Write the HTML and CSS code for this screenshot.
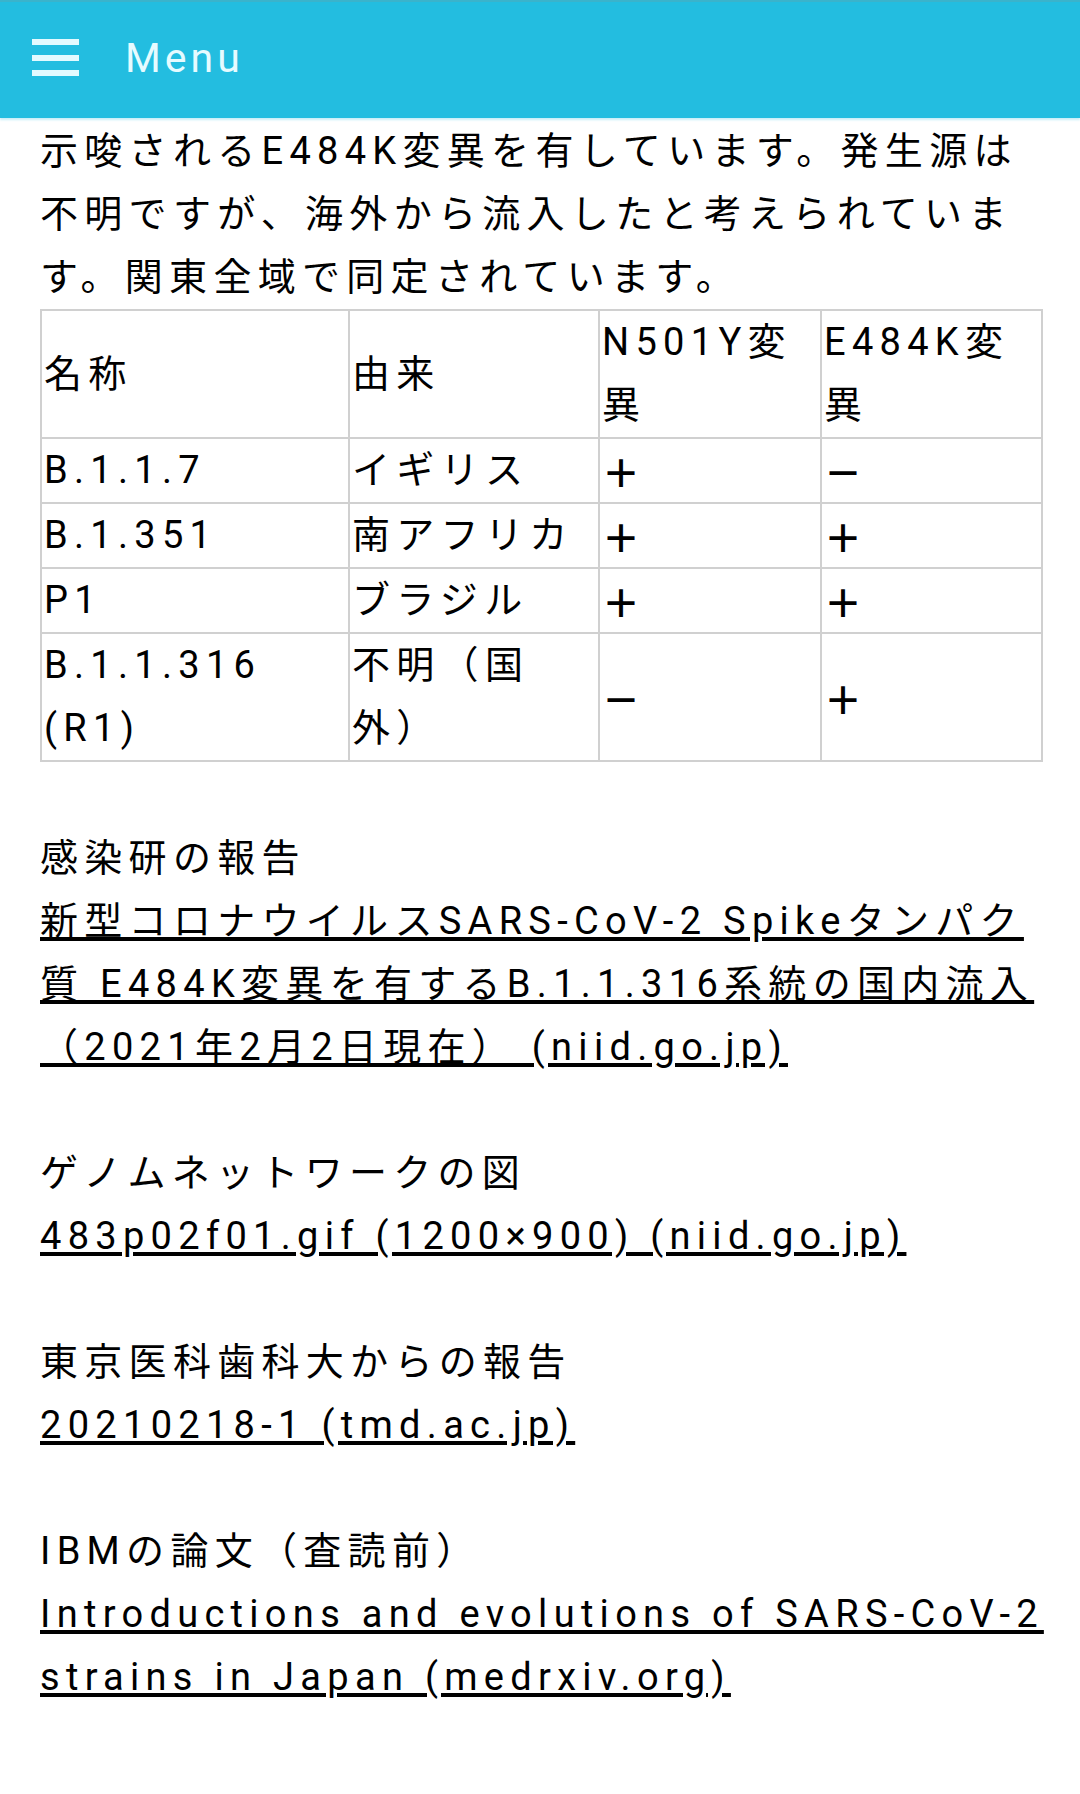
FILE: index.html
```html
<!DOCTYPE html>
<html lang="ja">
<head>
<meta charset="utf-8">
<title>Menu</title>
<link rel="stylesheet" href="styles.css">
</head>
<body>
<header class="topbar">
  <svg class="burger" width="47" height="38" viewBox="0 0 47 38" aria-hidden="true">
    <rect x="0" y="0" width="47" height="6"/>
    <rect x="0" y="16" width="47" height="6"/>
    <rect x="0" y="31" width="47" height="6"/>
  </svg>
  <span class="menu-label">Menu</span>
</header>
<main class="content">
  <p class="para">示唆されるE484K変異を有しています。発生源は不明ですが、海外から流入したと考えられています。関東全域で同定されています。</p>
  <table class="variants">
    <colgroup>
      <col class="c1"><col class="c2"><col class="c3"><col class="c4">
    </colgroup>
    <thead>
      <tr><th>名称</th><th>由来</th><th>N501Y変異</th><th>E484K変異</th></tr>
    </thead>
    <tbody>
      <tr><td>B.1.1.7</td><td>イギリス</td><td class="sign">＋</td><td class="sign">－</td></tr>
      <tr><td>B.1.351</td><td>南アフリカ</td><td class="sign">＋</td><td class="sign">＋</td></tr>
      <tr><td>P1</td><td>ブラジル</td><td class="sign">＋</td><td class="sign">＋</td></tr>
      <tr><td>B.1.1.316 (R1)</td><td>不明（国外）</td><td class="sign">－</td><td class="sign">＋</td></tr>
    </tbody>
  </table>
  <p class="section first">感染研の報告<br><a href="#">新型コロナウイルスSARS-CoV-2 Spikeタンパク質 E484K変異を有するB.1.1.316系統の国内流入（2021年2月2日現在） (niid.go.jp)</a></p>
  <p class="section">ゲノムネットワークの図<br><a href="#">483p02f01.gif (1200×900) (niid.go.jp)</a></p>
  <p class="section">東京医科歯科大からの報告<br><a href="#">20210218-1 (tmd.ac.jp)</a></p>
  <p class="section">IBMの論文（査読前）<br><a href="#">Introductions and evolutions of SARS-CoV-2 strains in Japan (medrxiv.org)</a></p>
</main>
</body>
</html>
```
FILE: styles.css
```css
html, body {
  margin: 0;
  padding: 0;
  background: #ffffff;
}

body {
  font-family: Roboto, "Noto Sans CJK JP", sans-serif;
  color: #000000;
  font-size: 38px;
  letter-spacing: 6.3px;
  line-height: 63px;
}

.topbar {
  height: 118px;
  background: #23bde0;
  border-top: 2px solid #3ab3cc;
  box-sizing: border-box;
  display: flex;
  align-items: center;
  padding-left: 32px;
  box-shadow: 0 2px 2px rgba(35, 189, 224, 0.25);
}

.burger {
  fill: #e3faff;
  flex: none;
  margin-top: -4px;
}

.menu-label {
  margin-left: 46px;
  font-family: Roboto, sans-serif;
  font-size: 41px;
  letter-spacing: 4px;
  line-height: 1;
  color: #e6fbff;
  margin-top: -3px;
}

.content {
  padding: 2px 30px 0 40px;
}

.para {
  margin: 0;
}

.variants {
  border-collapse: collapse;
  table-layout: fixed;
  width: 1001px;
  margin: 0;
}

.c1 { width: 308px; }
.c2 { width: 250px; }
.c3 { width: 222px; }
.c4 { width: 221px; }

.variants th,
.variants td {
  border: 2px solid #d0d0d0;
  padding: 0 2px;
  text-align: left;
  vertical-align: middle;
  font-weight: 400;
  line-height: 63px;
}

.variants td.sign {
  font-family: "Noto Sans CJK JP", sans-serif;
  font-weight: 700;
}

.section {
  margin: 63px 0 0 0;
}

.section.first {
  margin-top: 65px;
}

.section a {
  color: #000000;
  text-decoration: underline;
  text-decoration-thickness: 4px;
  text-underline-offset: 3px;
}
```
